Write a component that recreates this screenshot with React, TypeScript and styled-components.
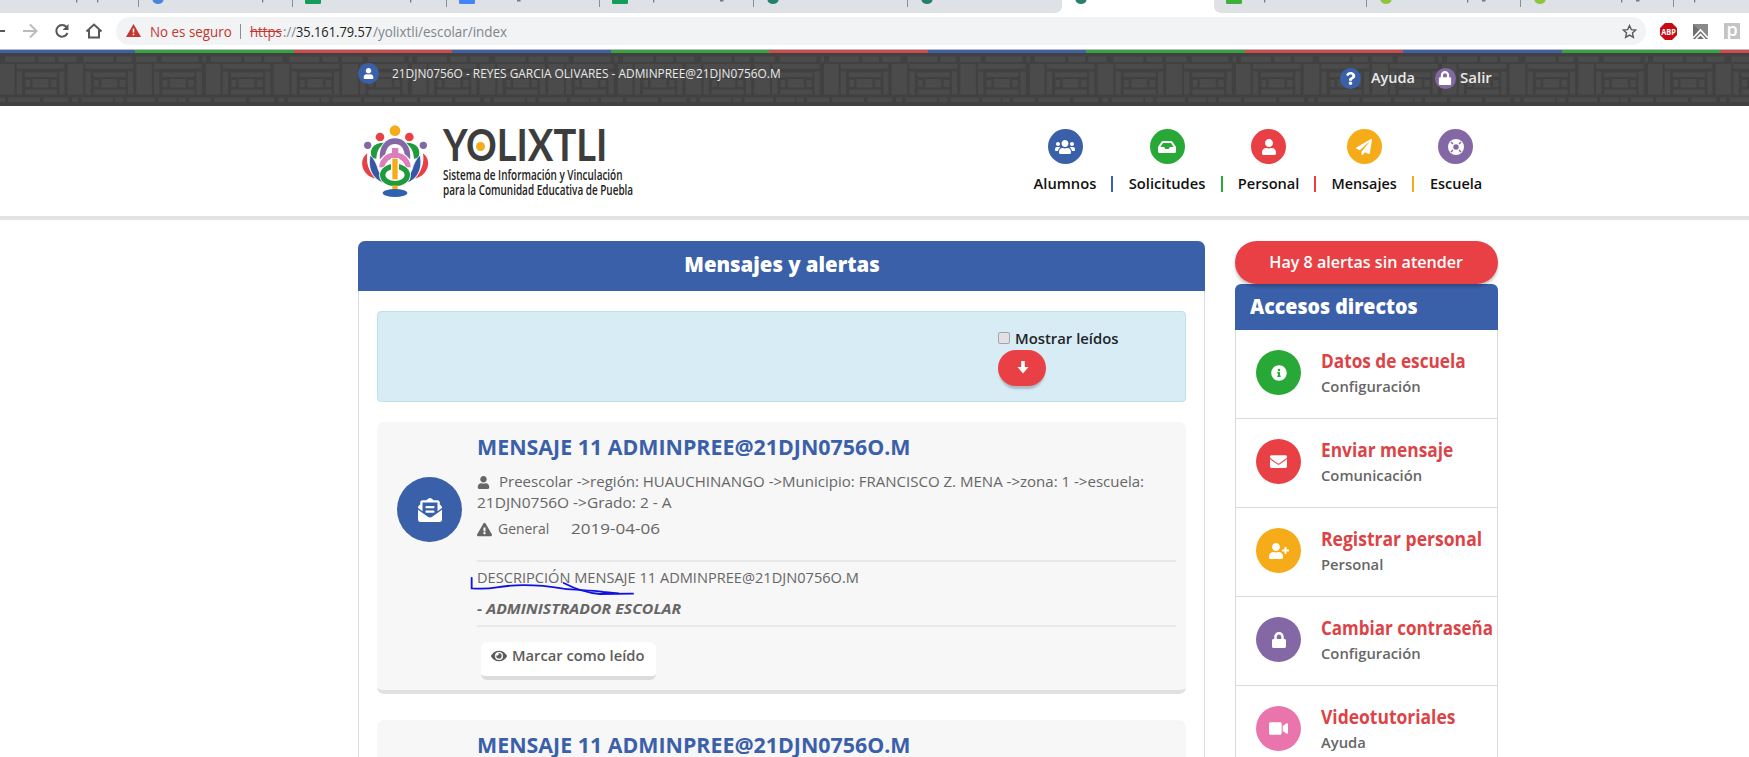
import React from "react";
import styled, { createGlobalStyle } from "styled-components";
import {
  FaUsers, FaInbox, FaUser, FaPaperPlane, FaInfoCircle, FaEnvelope, FaUserPlus, FaLock,
  FaVideo, FaEnvelopeOpenText, FaExclamationTriangle, FaEye, FaQuestion,
} from "react-icons/fa";

const BLUE = "#3b60aa";
const GREEN = "#28a937";
const RED = "#e84044";
const AMBER = "#f6ab18";
const PURPLE = "#8468a5";
const PINK = "#ea75ad";

const Global = createGlobalStyle`
  * { box-sizing: border-box; }
  html, body { margin: 0; background: #fff; }
  body { font-family: "Open Sans", "Noto Sans", sans-serif; font-size: 15px; color: #666; }
`;

const Page = styled.div`
  height: 757px;
  overflow: hidden;
`;

const Text = styled.span<{ $k?: number; $from?: string; $size?: number; $weight?: number; $color?: string; $up?: number; $font?: string }>`
  display: inline-block;
  white-space: nowrap;
  transform: translateY(${(p) => -(p.$up ?? 0)}px) scaleX(${(p) => p.$k ?? 1});
  transform-origin: ${(p) => p.$from ?? "left"} center;
  font-family: ${(p) => p.$font ?? "inherit"};
  font-size: ${(p) => p.$size ?? 15}px;
  font-weight: ${(p) => p.$weight ?? 400};
  color: ${(p) => p.$color ?? "inherit"};
`;

const Disc = styled.span<{ $d: number; $c: string }>`
  flex: none;
  display: flex;
  align-items: center;
  justify-content: center;
  width: ${(p) => p.$d}px;
  height: ${(p) => p.$d}px;
  border-radius: 50%;
  background: ${(p) => p.$c};
  color: #fff;
`;

/* ---------- browser ---------- */
const TabStrip = styled.div`
  display: flex;
  height: 13px;
  background: #fff;
  overflow: hidden;
`;
const TabGroup = styled.div<{ $side: "left" | "right" }>`
  display: flex;
  flex: ${(p) => (p.$side === "right" ? 1 : "none")};
  overflow: hidden;
  background: #dee1e6;
  border-radius: ${(p) => (p.$side === "left" ? "0 0 7px 0" : "0 0 0 7px")};
`;
const Tab = styled.div<{ $w?: number; $line?: boolean }>`
  flex: none;
  width: ${(p) => p.$w ?? 153.8}px;
  height: 7px;
  overflow: hidden;
  border-right: ${(p) => (p.$line === false ? "0" : "1px solid #8b8e93")};
  padding-left: 12px;
  svg { display: block; }
`;
const Toolbar = styled.div`
  display: flex;
  align-items: center;
  height: 36px;
  background: #fff;
`;
const NavIcons = styled.div`
  width: 116px;
  height: 32px;
  flex: none;
`;
const Omnibox = styled.div`
  display: flex;
  align-items: center;
  width: 1530px;
  height: 28px;
  border-radius: 14px;
  background: #f1f3f4;
  padding-left: 10px;
  color: #80868b;
`;
const UrlPart = styled.span<{ $w: number }>`
  flex: none;
  width: ${(p) => p.$w}px;
  line-height: 26px;
`;
const Divider = styled.i`
  width: 1px;
  height: 15px;
  background: #8b8e93;
  margin-right: 9px;
`;
const Star = styled.svg`
  margin-left: auto;
  margin-right: 9px;
`;
const Extensions = styled.div`
  display: flex;
  gap: 16px;
  padding-left: 14px;
  align-items: center;
`;
const Extension = styled.span<{ $bg: string }>`
  display: flex;
  justify-content: center;
  align-items: center;
  width: 16px;
  height: 16px;
  color: #fff;
  background: ${(p) => p.$bg};
  font-size: 18px;
  font-weight: 600;
  line-height: 10px;
  padding-bottom: 4px;
`;

/* ---------- site header ---------- */
const Stripe = styled.div`
  height: 4px;
  border-top: 1px solid #b9bcc2;
  background: repeating-linear-gradient(90deg, #3f60a2 0 158.55px, #35a342 158.55px 317.1px, #cf4a4b 317.1px 475.65px) -23.6px 0 / 2200px 100%;
`;
const BrickBar = styled.div`
  display: grid;
  height: 53px;
  color: #e9e9e9;
  > * { grid-area: 1 / 1; }
`;
const Account = styled.div`
  display: flex;
  align-items: flex-start;
  padding: 10px 251px 0 358px;
  z-index: 1;
`;
const AccountLinks = styled.div`
  display: flex;
  align-items: center;
  margin-left: auto;
  padding-top: 4px;
  width: 158px;
  height: 26px;
`;
const LinkLabel = styled.span<{ $w: number; $gap: number }>`
  width: ${(p) => p.$w}px;
  margin-left: ${(p) => p.$gap}px;
  line-height: 20px;
  flex: none;
`;
const SiteHeader = styled.header`
  display: flex;
  justify-content: space-between;
  height: 114px;
  padding: 14px 267px 0 355px;
  border-bottom: 4px solid #e3e3e3;
  background: #fff;
`;
const Brand = styled.div`
  display: flex;
`;
const BrandText = styled.div`
  position: relative;
  display: flex;
  flex-direction: column;
  padding-left: 7.5px;
  color: #3d3d3d;
`;
const BrandDot = styled.i`
  position: absolute;
  left: 40.5px;
  top: 22px;
  width: 9px;
  height: 9px;
  border-radius: 50%;
  background: ${AMBER};
`;
const BrandLine = styled.div<{ $h: number }>`
  height: ${(p) => p.$h}px;
  line-height: ${(p) => p.$h}px;
`;
const Menu = styled.nav`
  display: flex;
  padding-top: 9px;
  color: #111;
`;
const MenuItem = styled.div<{ $w: number }>`
  display: flex;
  flex-direction: column;
  align-items: center;
  width: ${(p) => p.$w}px;
  line-height: 38px;
`;
const Bar = styled.i<{ $c: string }>`
  width: 2px;
  height: 16px;
  margin: 47px 15.6px 0 15px;
  background: ${(p) => p.$c};
`;

/* ---------- body ---------- */
const Columns = styled.div`
  display: flex;
  gap: 30px;
  align-items: flex-start;
  padding: 21px 0 0 358px;
`;
const Main = styled.main`
  width: 847px;
  border: 1px solid #ddd;
  border-top: 0;
  border-radius: 7px 7px 0 0;
`;
const MainTitle = styled.div`
  height: 50px;
  margin: 0 -1px;
  border-radius: 7px 7px 0 0;
  background: ${BLUE};
  text-align: center;
  line-height: 46px;
`;
const Filter = styled.div`
  width: 809px;
  height: 91px;
  margin: 20px 18px 20px;
  padding: 17px 0 0 620px;
  border: 1px solid #bfe1ea;
  border-radius: 4px;
  background: #d8ecf5;
  color: #212529;
`;
const CheckRow = styled.label`
  display: flex;
  align-items: center;
  gap: 5px;
  height: 21px;
`;
const CheckBox = styled.i`
  width: 12px;
  height: 12px;
  margin-top: -4px;
  border: 1px solid #a3a3a8;
  border-radius: 2px;
  background: #e2e0e3;
`;
const DownButton = styled.button`
  display: flex;
  align-items: center;
  justify-content: center;
  width: 48px;
  height: 36px;
  padding: 0 0 2px 1px;
  border: 0;
  border-radius: 18px;
  background: ${RED};
  box-shadow: 0 4px 2px -1px rgba(60, 60, 60, 0.28);
`;
const Card = styled.article`
  display: flex;
  width: 809px;
  height: 272px;
  margin: 0 18px 26px;
  padding: 0 10px 0 20px;
  border-bottom: 4px solid #e1e1e1;
  border-radius: 7px;
  background: #f7f7f7;
`;
const CardIcon = styled.div`
  width: 80px;
  padding-top: 55px;
`;
const CardBody = styled.div`
  flex: 1;
  display: flex;
  flex-direction: column;
`;
const Line = styled.div<{ $h: number }>`
  position: relative;
  display: flex;
  align-items: center;
  flex: none;
  height: ${(p) => p.$h}px;
  line-height: ${(p) => p.$h}px;
`;
const Slot = styled.span<{ $w: number }>`
  display: flex;
  flex: none;
  width: ${(p) => p.$w}px;
`;
const Rule = styled.hr`
  width: 100%;
  height: 2px;
  margin: 0;
  border: 0;
  background: #e8e8e8;
`;
const Ink = styled.svg`
  position: absolute;
  left: -7px;
  top: 10px;
`;
const ReadButton = styled.button`
  display: flex;
  align-items: center;
  gap: 5px;
  width: 175px;
  height: 38px;
  margin: 15px 0 0 4px;
  padding: 0 0 7px 10px;
  border: 0;
  border-bottom: 4px solid #dcdcdc;
  border-radius: 6px;
  background: #fff;
  color: #5c5c5c;
  font-family: inherit;
`;
const Side = styled.aside`
  width: 263px;
`;
const AlertPill = styled.div`
  position: relative;
  height: 43px;
  border-radius: 22px;
  background: ${RED};
  text-align: center;
  line-height: 42px;
  box-shadow: 0 3px 3px rgba(0, 0, 0, 0.22);
`;
const SideTitle = styled.div`
  height: 46px;
  padding-left: 15px;
  border-radius: 6px 6px 0 0;
  background: ${BLUE};
  line-height: 45px;
`;
const Shortcut = styled.div`
  display: flex;
  height: 89px;
  padding: 20px 0 0 20px;
  border: 1px solid #d9dcdc;
  border-top: 0;
`;
const ShortcutText = styled.div`
  display: flex;
  flex-direction: column;
  align-items: flex-start;
  padding-left: 20px;
`;

type TabInfo = { w?: number; icon?: string; round?: boolean; bits: [number, number][]; line?: boolean };
const tabsLeft: TabInfo[] = [
  { w: 139, bits: [[76, 1], [97, 1]] },
  { icon: "#4a86d8", round: true, bits: [[123, 1]] },
  { icon: "#129d58", bits: [[117, 1]] },
  { icon: "#4385f4", bits: [[70, 4]] },
  { icon: "#129d58", bits: [[53, 1], [120, 4]] },
  { icon: "#26806c", round: true, bits: [] },
  { icon: "#26806c", round: true, bits: [], line: false },
];
const tabsRight: TabInfo[] = [
  { w: 153, icon: "#3fae3a", bits: [[50, 1]] },
  { icon: "#8cc63f", round: true, bits: [[100, 1], [115, 5]] },
  { icon: "#8cc63f", round: true, bits: [[100, 1], [115, 5]] },
  { bits: [[20, 1]], line: false },
];

function TabView({ t }: { t: TabInfo }) {
  return (
    <Tab $w={t.w} $line={t.line}>
      <svg width="140" height="7" viewBox="12 0 140 7">
        {t.icon && (t.round
          ? <ellipse cx="19" cy="0" rx="5.5" ry="4" fill={t.icon} />
          : <rect x="12" y="-6" width="16" height="10" rx="1.5" fill={t.icon} />)}
        {t.bits.map(([x, w]) => <rect key={x} x={x} y="0" width={w > 2 ? 3.5 : 1.3} height={w > 2 ? 1.5 : 2.5} fill="#777b80" />)}
      </svg>
    </Tab>
  );
}

/* Relief of stone blocks, repeated every 206 px */
const courseTop = [[5, 30], [38.3, 16.7], [58.3, 18.3], [83.3, 30], [116.7, 15], [136, 20.7], [161.7, 36.6], [202.7, 4]];
const courseBottom = [[0, 5], [8.3, 31.7], [43.3, 25], [72.3, 6], [81.7, 31.6], [115, 8.3], [126.7, 28.3], [158.3, 18.4], [178.3, 7.4], [189, 17]];
function Bricks() {
  return (
    <svg width="100%" height="53">
      <defs>
        <pattern id="bricks" width="206" height="53" patternUnits="userSpaceOnUse">
          <rect width="206" height="53" fill="#414141" />
          <g fill="#4b4b4b">
            {courseTop.map(([x, w]) => <rect key={"t" + x} x={x} y="3.5" width={w} height="5.5" />)}
            {courseBottom.map(([x, w]) => <rect key={"b" + x} x={x} y="44.5" width={w} height="4.5" />)}
            {[0, 68.7, 137.3].map((o) => (
              <g key={o} transform={`translate(${o} 0)`}>
                <rect x="-1" y="11" width="15.5" height="30.5" />
                <rect x="16.8" y="11" width="47.5" height="4.8" />
                <rect x="16.8" y="18.5" width="5.2" height="23" />
                <rect x="59.2" y="18.5" width="5.2" height="23" />
                <rect x="25" y="19.5" width="32" height="4.5" />
                <rect x="25" y="36.5" width="32" height="4.8" />
                <rect x="25.5" y="27" width="4.5" height="7" />
                <rect x="32.5" y="26" width="16" height="8.5" />
                <rect x="51" y="27" width="5.5" height="7" />
              </g>
            ))}
          </g>
        </pattern>
      </defs>
      <rect width="100%" height="53" fill="url(#bricks)" />
    </svg>
  );
}

function Logo() {
  return (
    <svg width="80" height="80" viewBox="0 0 240 240" fill="none">
      <circle cx="120" cy="32" r="16" fill={AMBER} />
      <circle cx="75" cy="51" r="13" fill={RED} />
      <circle cx="163" cy="51" r="13" fill={RED} />
      <circle cx="38" cy="76" r="11" fill={PURPLE} />
      <circle cx="205" cy="76" r="11" fill={PURPLE} />
      <g id="side">
        <path d="M37 100C8 122 22 166 60 176C42 152 32 130 37 100Z" fill={RED} />
        <path d="M52 114C40 90 54 66 92 68C74 78 66 90 64 116Z" fill="#1f9b3c" />
        <path d="M46 105C36 148 56 184 96 192C98 180 78 170 70 150C64 128 56 116 46 105Z" fill="#3557a6" stroke="#fff" strokeWidth="2" />
      </g>
      <use href="#side" transform="translate(241 0) scale(-1 1)" />
      <path d="M83 118C76 46 164 46 157 118" stroke="#fff" strokeWidth="22" />
      <path d="M83 116C76 46 164 46 157 116" stroke={PURPLE} strokeWidth="17" />
      <path d="M79 144C82 92 158 92 161 144" stroke="#fff" strokeWidth="22" />
      <path d="M81 142C84 94 156 94 159 142" stroke="#db7fbb" strokeWidth="17" />
      <rect x="111" y="84" width="19" height="24" fill="#db7fbb" />
      <ellipse cx="120" cy="165" rx="37" ry="26" stroke="#fff" strokeWidth="21" />
      <ellipse cx="120" cy="165" rx="37" ry="26" stroke="#1f9b3c" strokeWidth="16" />
      <rect x="108" y="114" width="24" height="62" fill="#fff" />
      <rect x="112" y="116" width="16" height="62" fill={AMBER} />
      <rect x="112" y="196" width="16" height="14" fill={AMBER} />
      <ellipse cx="120" cy="219" rx="37" ry="12" fill="#2e62ae" />
    </svg>
  );
}

const LifeRing = () => (
  <svg width="16" height="16" viewBox="0 0 16 16">
    <circle cx="8" cy="8" r="8" fill="#fff" />
    <circle cx="8" cy="8" r="2.7" fill={PURPLE} />
    <path d="M3 3l2 2M13 3l-2 2M3 13l2-2M13 13l-2-2" stroke={PURPLE} strokeWidth="1.4" />
  </svg>
);

const menu = [
  { label: "Alumnos", w: 62.7, k: 0.981, c: BLUE, icon: <FaUsers size={20} /> },
  { label: "Solicitudes", w: 76.7, k: 0.982, c: GREEN, icon: <FaInbox size={18} /> },
  { label: "Personal", w: 61, k: 0.975, c: RED, icon: <FaUser size={16} /> },
  { label: "Mensajes", w: 65.3, k: 0.959, c: AMBER, icon: <FaPaperPlane size={16} /> },
  { label: "Escuela", w: 52.3, k: 0.965, c: PURPLE, icon: <LifeRing /> },
];

const shortcuts = [
  { title: "Datos de escuela", k: 0.907, sub: "Configuración", c: GREEN, icon: <FaInfoCircle size={16} /> },
  { title: "Enviar mensaje", k: 0.912, sub: "Comunicación", c: RED, icon: <FaEnvelope size={17} /> },
  { title: "Registrar personal", k: 0.923, sub: "Personal", c: AMBER, icon: <FaUserPlus size={20} /> },
  { title: "Cambiar contraseña", k: 0.895, sub: "Configuración", c: PURPLE, icon: <FaLock size={16} /> },
  { title: "Videotutoriales", k: 0.919, sub: "Ayuda", c: PINK, icon: <FaVideo size={19} /> },
];

function MessageCard({ inked }: { inked?: boolean }) {
  return (
    <Card>
      <CardIcon>
        <Disc $d={65} $c={BLUE}><FaEnvelopeOpenText size={24} /></Disc>
      </CardIcon>
      <CardBody>
        <Line $h={50}><Text $size={22} $weight={700} $color={BLUE} $k={0.972} $up={1}>MENSAJE 11 ADMINPREE@21DJN0756O.M</Text></Line>
        <Line $h={21}>
          <Slot $w={22}><FaUser size={13} /></Slot>
          <Text $up={1} $k={1.002}>Preescolar -&gt;región: HUAUCHINANGO -&gt;Municipio: FRANCISCO Z. MENA -&gt;zona: 1 -&gt;escuela:</Text>
        </Line>
        <Line $h={21}><Text $k={1.031} $up={1}>21DJN0756O -&gt;Grado: 2 - A</Text></Line>
        <Line $h={31}>
          <Slot $w={21}><FaExclamationTriangle size={15} /></Slot>
          <Slot $w={73}><Text $k={0.93} $up={1}>General</Text></Slot>
          <Text $k={1.137} $up={1}>2019-04-06</Text>
        </Line>
        <Line $h={15} />
        <Rule />
        <Line $h={32}>
          <Text $k={0.973} $up={1}>DESCRIPCIÓN MENSAJE 11 ADMINPREE@21DJN0756O.M</Text>
          {inked && (
            <Ink width="170" height="32" viewBox="300 306 510 96" fill="none" stroke="#1212e0" strokeWidth="5.5" strokeLinecap="round">
              <path d="M305 324V355C335 357 355 357 380 352C440 342 520 346 580 356C620 361 660 360 700 366L745 370" />
              <path d="M581 339C610 354 650 369 690 372L789 371" />
            </Ink>
          )}
        </Line>
        <Line $h={30}><Text as="em" $weight={700} $k={1.055} $up={1}>- ADMINISTRADOR ESCOLAR</Text></Line>
        <Line $h={1} />
        <Rule />
        <ReadButton>
          <FaEye size={16} />
          <Text $weight={600} $k={0.981} $up={1}>Marcar como leído</Text>
        </ReadButton>
      </CardBody>
    </Card>
  );
}

export default function App() {
  return (
    <Page>
      <Global />
      <TabStrip>
        <TabGroup $side="left">{tabsLeft.map((t, i) => <TabView key={i} t={t} />)}</TabGroup>
        <Tab $w={152} $line={false}>
          <svg width="30" height="6"><ellipse cx="7" cy="0" rx="5.5" ry="4" fill="#26806c" /></svg>
        </Tab>
        <TabGroup $side="right">{tabsRight.map((t, i) => <TabView key={i} t={t} />)}</TabGroup>
      </TabStrip>
      <Toolbar>
        <NavIcons>
          <svg width="116" height="32" fill="none" stroke="#55585c" strokeWidth="2">
            <path d="M0 16H5" />
            <path d="M23 16H36M30 9.500L36.500 16L30 22.500" stroke="#b9bbbe" />
            <path d="M66.500 12A5.800 5.800 0 1 0 67.500 18" />
            <path d="M68.500 9V15H62.500Z" fill="#55585c" stroke="none" />
            <path d="M86.500 16.500L94 9.500L101.500 16.500M89 15V22.500H99V15" />
          </svg>
        </NavIcons>
        <Omnibox>
          <UrlPart $w={24}>
            <svg width="15" height="13" viewBox="0 0 15 13"><path d="M7.500 0L15 13H0Z" fill="#c5362c" /><path d="M7.500 4.500V8.500M7.500 9.800V11.300" stroke="#fff" strokeWidth="1.500" /></svg>
          </UrlPart>
          <UrlPart $w={90}><Text $k={0.89} $color="#c5362c">No es seguro</Text></UrlPart>
          <Divider />
          <UrlPart $w={32.500}><Text $k={0.88} $color="#c5362c"><s>https</s></Text></UrlPart>
          <UrlPart $w={13}><Text $k={0.87}>://</Text></UrlPart>
          <UrlPart $w={77}><Text $k={0.855} $color="#222">35.161.79.57</Text></UrlPart>
          <UrlPart $w={140}><Text $k={0.895}>/yolixtli/escolar/index</Text></UrlPart>
          <Star width="15" height="15" viewBox="0 0 24 24" fill="none" stroke="#55585c" strokeWidth="2.200">
            <path d="M12 2.500L14.900 9L22 9.700L16.700 14.400L18.200 21.400L12 17.700L5.800 21.400L7.300 14.400L2 9.700L9.100 9Z" />
          </Star>
        </Omnibox>
        <Extensions>
          <svg width="17" height="17" viewBox="0 0 17 17">
            <path d="M5 0H12L17 5V12L12 17H5L0 12V5Z" fill="#c70d12" />
            <text x="8.500" y="11.500" fontSize="8" fontWeight="700" fill="#fff" textAnchor="middle" textLength="14.500" lengthAdjust="spacingAndGlyphs">ABP</text>
          </svg>
          <svg width="15" height="15" viewBox="0 0 15 15">
            <rect width="15" height="15" fill="#8a8a8a" /><path d="M0 0L15 15H0Z" fill="#6f6f6f" />
            <path d="M0 14L7.500 6L15 14M3 15L7.500 10.500L12 15" stroke="#fff" strokeWidth="1.600" fill="none" />
          </svg>
          <Extension $bg="#c4c4c4">p</Extension>
        </Extensions>
      </Toolbar>

      <Stripe />
      <BrickBar>
        <Bricks />
        <Account>
          <Disc $d={21} $c={BLUE}><FaUser size={11} /></Disc>
          <LinkLabel $w={400} $gap={12.500}><Text $size={13} $k={0.915} $up={1}>21DJN0756O - REYES GARCIA OLIVARES - ADMINPREE@21DJN0756O.M</Text></LinkLabel>
          <AccountLinks>
            <Disc $d={21} $c={BLUE}><FaQuestion size={13} /></Disc>
            <LinkLabel $w={63.500} $gap={10}><Text $weight={600} $k={0.967} $up={1}>Ayuda</Text></LinkLabel>
            <Disc $d={21} $c={PURPLE}><FaLock size={14} /></Disc>
            <LinkLabel $w={34} $gap={4.500}><Text $weight={600} $up={1}>Salir</Text></LinkLabel>
          </AccountLinks>
        </Account>
      </BrickBar>

      <SiteHeader>
        <Brand>
          <Logo />
          <BrandText>
            <BrandLine $h={47}><Text $size={43} $weight={700} $k={0.885} $font="Lato, sans-serif" $up={-1}>YOLIXTLI</Text></BrandLine>
            <BrandDot />
            <BrandLine $h={14.500}><Text $size={13.500} $weight={600} $k={0.737} $color="#222">Sistema de Información y Vinculación</Text></BrandLine>
            <BrandLine $h={14.500}><Text $size={13.500} $weight={600} $k={0.736} $color="#222">para la Comunidad Educativa de Puebla</Text></BrandLine>
          </BrandText>
        </Brand>
        <Menu>
          {menu.map((m, i) => (
            <React.Fragment key={m.label}>
              <MenuItem $w={m.w}>
                <Disc $d={35} $c={m.c}>{m.icon}</Disc>
                <Text $weight={600} $k={m.k} $from="center">{m.label}</Text>
              </MenuItem>
              {i < menu.length - 1 && <Bar $c={m.c} />}
            </React.Fragment>
          ))}
        </Menu>
      </SiteHeader>

      <Columns>
        <Main>
          <MainTitle><Text $size={21} $weight={800} $k={0.968} $from="center" $color="#fff">Mensajes y alertas</Text></MainTitle>
          <Filter>
            <CheckRow><CheckBox /><Text $weight={600} $k={0.99} $up={2}>Mostrar leídos</Text></CheckRow>
            <DownButton>
              <svg width="12" height="13" viewBox="0 0 12 13"><path d="M4.200 0H7.800V6H11.500L6 12.500L0.500 6H4.200Z" fill="#fff" /></svg>
            </DownButton>
          </Filter>
          <MessageCard inked />
          <MessageCard />
        </Main>
        <Side>
          <AlertPill><Text $size={16} $weight={600} $k={1.007} $from="center" $color="#fff">Hay 8 alertas sin atender</Text></AlertPill>
          <SideTitle><Text $size={21} $weight={800} $k={0.932} $color="#fff">Accesos directos</Text></SideTitle>
          {shortcuts.map((s) => (
            <Shortcut key={s.title}>
              <Disc $d={45} $c={s.c}>{s.icon}</Disc>
              <ShortcutText>
                <Line $h={22}><Text $size={19} $weight={700} $k={s.k} $color="#dc4347">{s.title}</Text></Line>
                <Line $h={28}><Text $weight={600} $k={0.985}>{s.sub}</Text></Line>
              </ShortcutText>
            </Shortcut>
          ))}
        </Side>
      </Columns>
    </Page>
  );
}
